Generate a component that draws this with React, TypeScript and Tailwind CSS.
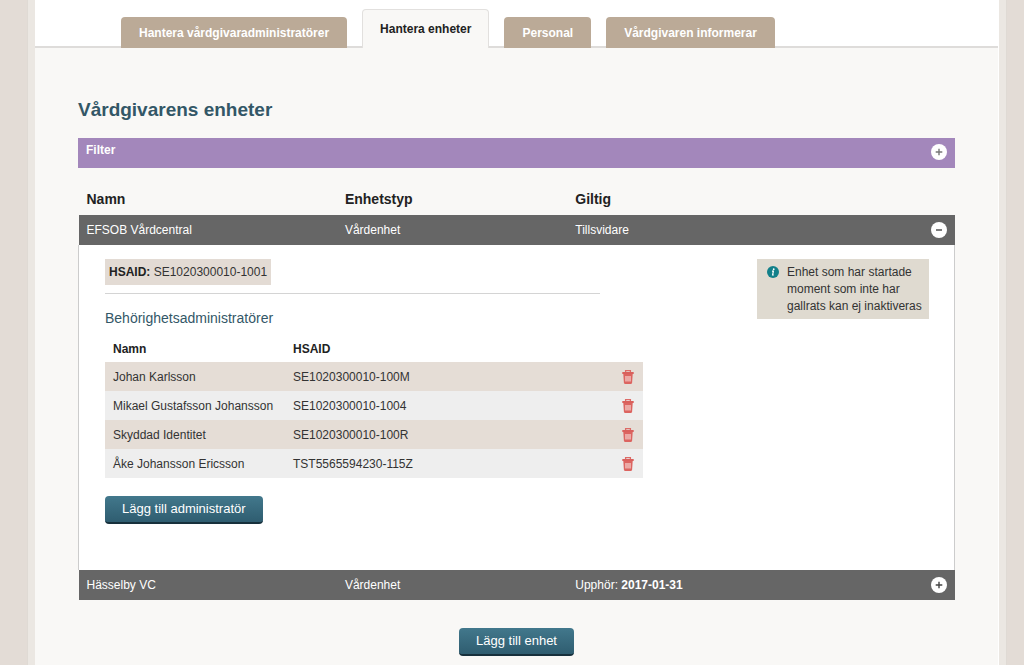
import React from "react";

type Admin = { name: string; hsaId: string };

const tabs = [
  { label: "Hantera vårdgivaradministratörer", active: false },
  { label: "Hantera enheter", active: true },
  { label: "Personal", active: false },
  { label: "Vårdgivaren informerar", active: false },
];

const admins: Admin[] = [
  { name: "Johan Karlsson", hsaId: "SE1020300010-100M" },
  { name: "Mikael Gustafsson Johansson", hsaId: "SE1020300010-1004" },
  { name: "Skyddad Identitet", hsaId: "SE1020300010-100R" },
  { name: "Åke Johansson Ericsson", hsaId: "TST5565594230-115Z" },
];

function ToggleIcon({ open, className }: { open: boolean; className: string }) {
  return (
    <svg viewBox="0 0 16 16" className={`block size-4 ${className}`} aria-hidden="true">
      <circle cx="8" cy="8" r="8" fill="#fff" />
      <path d={open ? "M5 8h6" : "M4.7 8h6.6M8 4.7v6.6"} stroke="currentColor" strokeWidth="1.4" />
    </svg>
  );
}

function TrashIcon() {
  return (
    <svg viewBox="0 0 12 14" className="block h-3.5 w-3" aria-hidden="true">
      <path d="M3.6 2V.7h4.8V2" fill="none" stroke="#dc6b67" strokeWidth="1.3" />
      <path d="M.3 2h11.4v2H.3z" fill="#d9605c" />
      <path d="M1.3 4h9.4l-.6 8.8c0 .7-.5 1.2-1.200 1.200H3.100c-.7 0-1.200-.5-1.200-1.200z" fill="#dc6460" />
      <path d="M4 6v5.500M6 6v5.500M8 6v5.500" stroke="#fbeeea" strokeWidth="1" />
    </svg>
  );
}

function InfoIcon() {
  return (
    <svg viewBox="0 0 12 12" className="mt-0.5 block size-3 shrink-0" aria-hidden="true">
      <circle cx="6" cy="6" r="6" fill="#12808a" />
      <circle cx="6.7" cy="3.2" r=".9" fill="#fff" />
      <path d="M5 5.200h1.400L5.600 9h1.200" fill="none" stroke="#fff" strokeWidth="1.2" />
    </svg>
  );
}

function ActionButton({ children }: { children: React.ReactNode }) {
  return (
    <button
      type="button"
      className="h-7 rounded border-b-2 border-[#17303c] bg-linear-to-b from-[#42788c] to-[#2f5d70] px-[17px] text-[13px] leading-5 text-white"
    >
      {children}
    </button>
  );
}

function UnitRow({
  name,
  type,
  open,
  children,
}: {
  name: string;
  type: string;
  open: boolean;
  children: React.ReactNode;
}) {
  return (
    <tr className="h-[30px] bg-[#666] text-white">
      <td className="px-2">{name}</td>
      <td className="px-2">{type}</td>
      <td className="px-2">
        <div className="flex items-center justify-between">
          <span>{children}</span>
          <button type="button" aria-expanded={open} aria-label={name}>
            <ToggleIcon open={open} className="text-[#444]" />
          </button>
        </div>
      </td>
    </tr>
  );
}

function AdminTable() {
  return (
    <table className="w-full max-w-[538px] table-fixed">
      <colgroup>
        <col className="w-[180px]" />
        <col />
        <col className="w-[29px]" />
      </colgroup>
      <thead>
        <tr className="h-[27px] text-left text-[#222]">
          <th className="px-2">Namn</th>
          <th className="px-2">HSAID</th>
          <td />
        </tr>
      </thead>
      <tbody>
        {admins.map((admin) => (
          <tr key={admin.hsaId} className="h-[29px] odd:bg-[#e5ddd6] even:bg-[#eee]">
            <td className="px-2 whitespace-nowrap">{admin.name}</td>
            <td className="px-2">{admin.hsaId}</td>
            <td className="px-2">
              <button type="button" className="block" aria-label={admin.name}>
                <TrashIcon />
              </button>
            </td>
          </tr>
        ))}
      </tbody>
    </table>
  );
}

export default function App() {
  return (
    <div className="min-h-screen bg-[#e3dcd6] pr-[17px] pl-[27px] font-['Liberation_Sans',Arial,sans-serif] text-xs text-[#333]">
      <div className="min-h-screen border-x border-[#dfdad4] bg-[#ebe7e2] px-[7px]">
        <div className="min-h-screen border-r border-white bg-[#f9f8f6]">
          <nav className="flex items-end gap-[15px] bg-white bg-[linear-gradient(to_top,#dedcda_2px,transparent_2px)] pt-[9px] pl-[86px] font-bold">
            {tabs.map((tab) => (
              <a
                key={tab.label}
                href="#"
                aria-current={tab.active ? "page" : undefined}
                className={
                  tab.active
                    ? "rounded-t-sm border border-b-0 border-[#e2e0de] bg-[#f9f8f6] px-[17px] pt-[11px] pb-[11px] leading-4 text-[#222]"
                    : "rounded-t-sm bg-[#bbaa97] px-[18px] pt-2 pb-[7px] leading-4 text-white"
                }
              >
                {tab.label}
              </a>
            ))}
          </nav>

          <main className="px-[43px] pt-[50px] pb-[9px]">
            <h1 className="text-[19px] leading-6 font-bold text-[#335767]">Vårdgivarens enheter</h1>

            <button
              type="button"
              className="mt-4 flex h-[30px] w-full items-start justify-between bg-[#a387bb] px-2 text-left font-bold text-white"
            >
              <span className="pt-1">Filter</span>
              <ToggleIcon open={false} className="mt-1.5 text-[#777]" />
            </button>

            <table className="mt-4 w-full table-fixed">
              <colgroup>
                <col className="w-[29.5%]" />
                <col className="w-[26.3%]" />
                <col />
              </colgroup>
              <thead>
                <tr className="h-[31px] text-left text-sm text-[#222]">
                  <th className="px-2 pb-0.5">Namn</th>
                  <th className="px-2 pb-0.5">Enhetstyp</th>
                  <th className="px-2 pb-0.5">Giltig</th>
                </tr>
              </thead>
              <tbody>
                <UnitRow name="EFSOB Vårdcentral" type="Vårdenhet" open>
                  Tillsvidare
                </UnitRow>
                <tr>
                  <td colSpan={3} className="border-x border-[#ccc] bg-white pt-3.5 pr-[25px] pb-[46px] pl-[26px]">
                    <div className="flex items-start justify-between gap-6">
                      <div className="min-w-0 grow">
                        <p className="inline-block bg-[#e3dbd4] px-1 py-[5px] leading-4">
                          <strong className="text-[#222]">HSAID:</strong> SE1020300010-1001
                        </p>
                        <hr className="mt-2 max-w-[495px] border-[#d4d4d4]" />
                        <h2 className="mt-[15px] mb-2 text-sm leading-[18px] text-[#335767]">
                          Behörighetsadministratörer
                        </h2>
                        <AdminTable />
                        <div className="mt-[18px]">
                          <ActionButton>Lägg till administratör</ActionButton>
                        </div>
                      </div>
                      <aside className="flex w-[172px] shrink-0 gap-2 bg-[#dfdad0] pt-[5px] pr-1 pb-1 pl-2.5 leading-[17px]">
                        <InfoIcon />
                        <p>Enhet som har startade moment som inte har gallrats kan ej inaktiveras</p>
                      </aside>
                    </div>
                  </td>
                </tr>
                <UnitRow name="Hässelby VC" type="Vårdenhet" open={false}>
                  Upphör: <strong>2017-01-31</strong>
                </UnitRow>
              </tbody>
            </table>

            <div className="mt-7 flex justify-center">
              <ActionButton>Lägg till enhet</ActionButton>
            </div>
          </main>
        </div>
      </div>
    </div>
  );
}
